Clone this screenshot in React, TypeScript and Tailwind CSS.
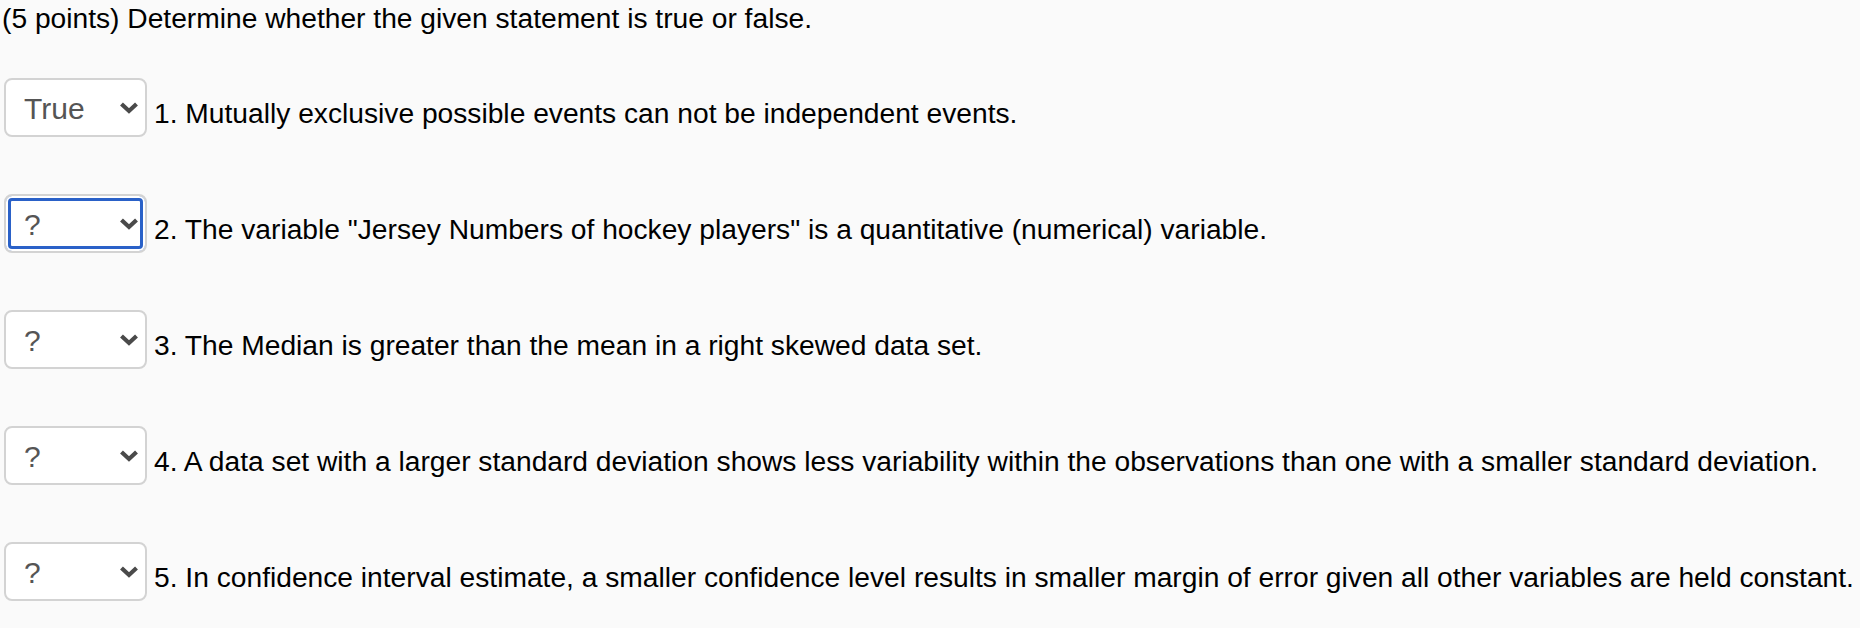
import React from "react";

const Chevron = () => (
  <svg width="20" height="14" viewBox="0 0 20 14" className="shrink-0">
    <polyline points="2.5,3 10,10 17.5,3" fill="none" stroke="#4a4a4a" strokeWidth="4.2" strokeLinecap="butt" strokeLinejoin="miter" />
  </svg>
);

const Select = ({ value, focused }: { value: string; focused?: boolean }) => (
  <div
    className={
      "w-[143px] h-[59px] shrink-0 rounded-[8px] border-2 border-[#d3d3d3] bg-white flex items-center justify-between pl-[18px] pr-[6px] " +
      (focused ? "shadow-[inset_0_0_0_2px_#ffffff,inset_0_0_0_5px_#2a61c8]" : "")
    }
  >
    <span className="text-[30px] leading-[34px] pt-[3px] text-[#555555]">{value}</span>
    <Chevron />
  </div>
);

const items: { value: string; focused?: boolean; text: string }[] = [
  { value: "True", text: "1. Mutually exclusive possible events can not be independent events." },
  { value: "?", focused: true, text: "2. The variable \"Jersey Numbers of hockey players\" is a quantitative (numerical) variable." },
  { value: "?", text: "3. The Median is greater than the mean in a right skewed data set." },
  { value: "?", text: "4. A data set with a larger standard deviation shows less variability within the observations than one with a smaller standard deviation." },
  { value: "?", text: "5. In confidence interval estimate, a smaller confidence level results in smaller margin of error given all other variables are held constant." },
];

export default function App() {
  return (
    <div className="min-h-screen w-full bg-[#fafafa] text-black font-['Liberation_Sans',Arial,Helvetica,sans-serif] overflow-hidden">
      <p className="text-[28.2px] leading-[32px] pt-[2px] pl-[2px] whitespace-nowrap">
        (5 points) Determine whether the given statement is true or false.
      </p>
      <div className="flex flex-col gap-[57px] mt-[44px] pl-[4px]">
        {items.map((it, i) => (
          <div key={i} className="flex items-start">
            <Select value={it.value} focused={it.focused} />
            <span className="ml-[7px] mt-[18px] text-[28.2px] leading-[34px] whitespace-nowrap">{it.text}</span>
          </div>
        ))}
      </div>
    </div>
  );
}
